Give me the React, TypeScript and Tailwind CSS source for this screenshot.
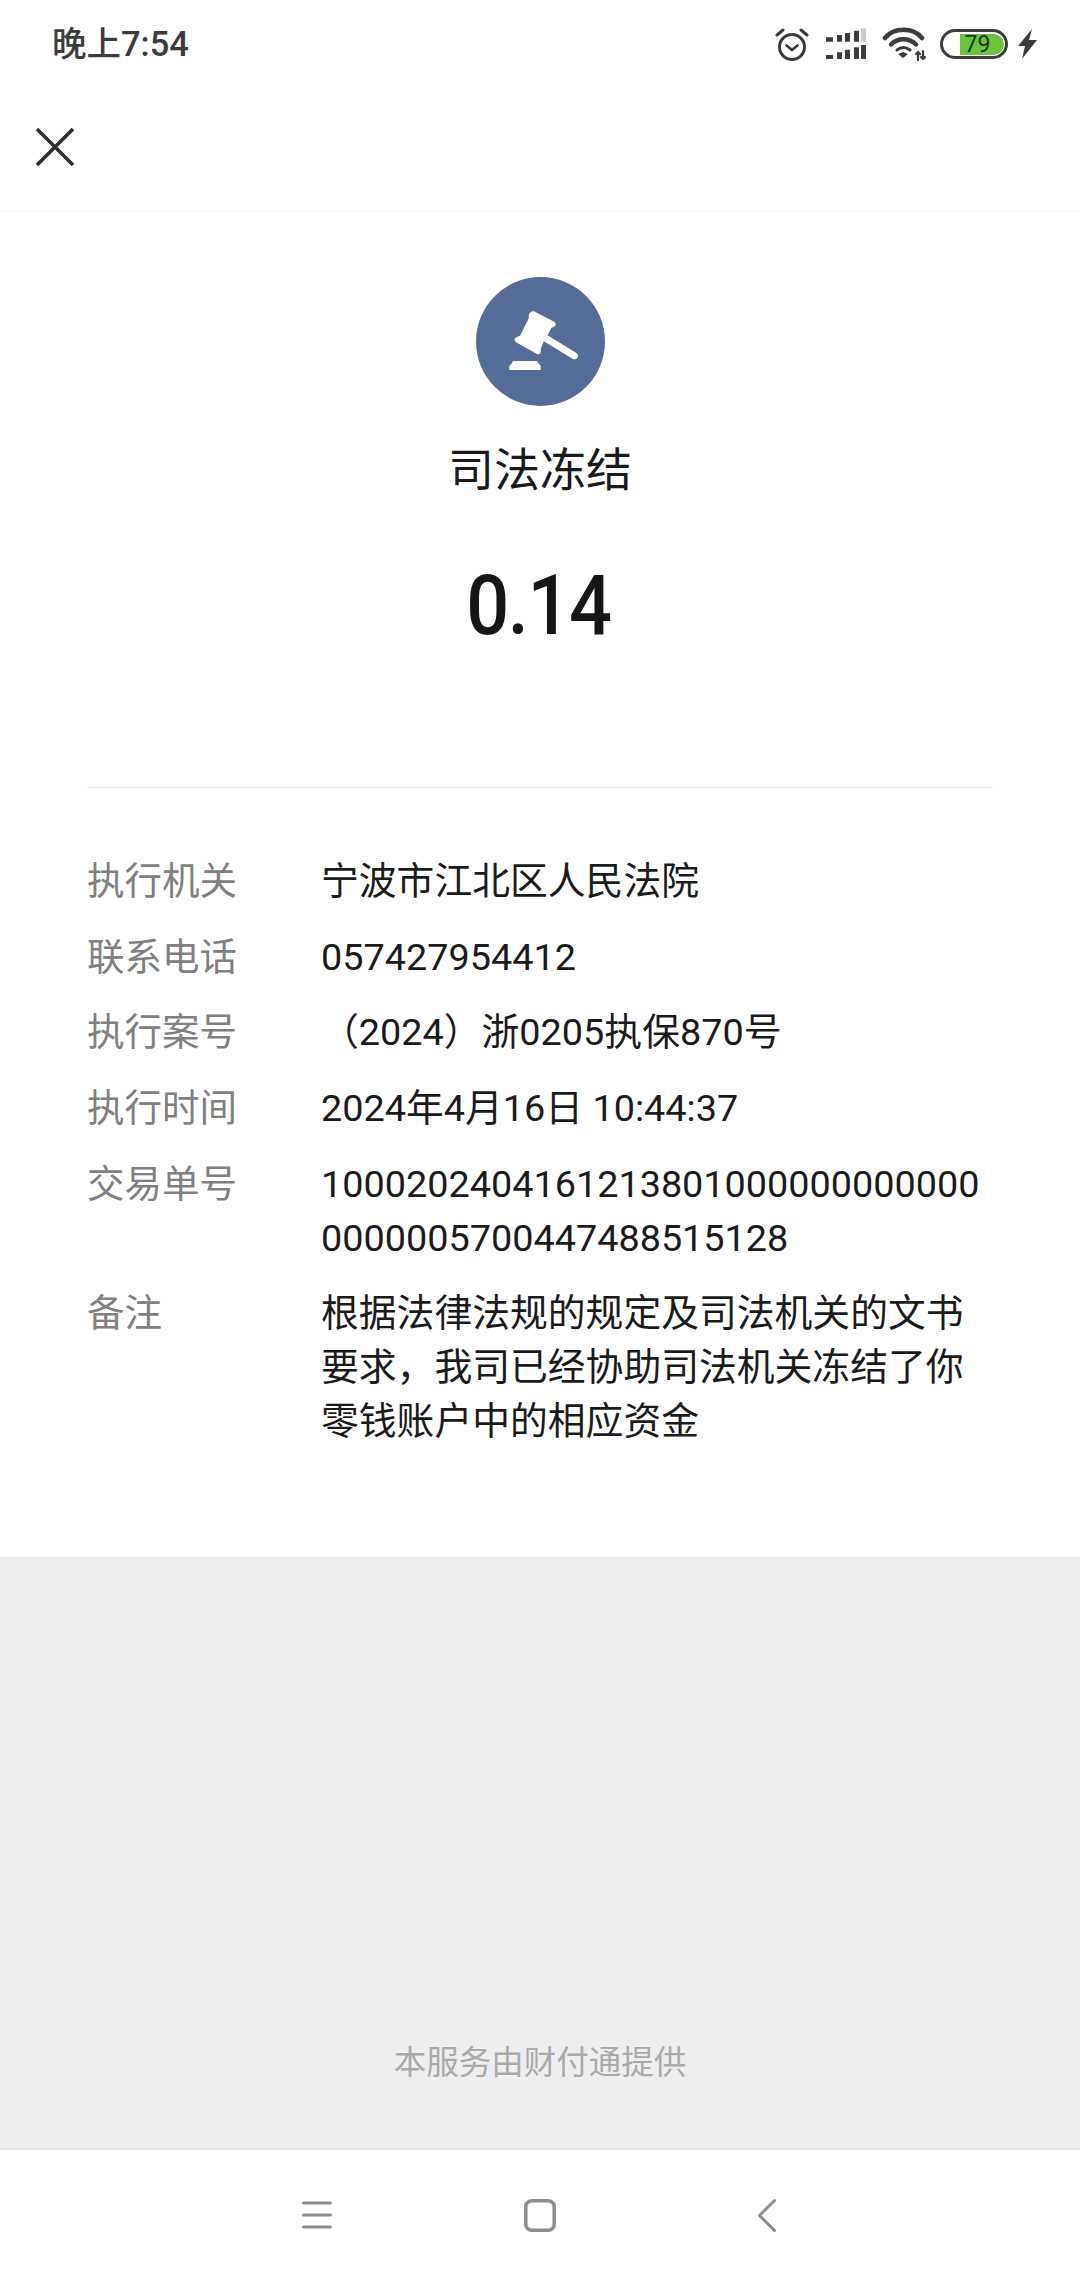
const cjk = "font-['Roboto','Noto_Sans_CJK_SC',sans-serif]";

const rows = [
  { label: "执行机关", value: ["宁波市江北区人民法院"] },
  { label: "联系电话", value: ["057427954412"] },
  { label: "执行案号", value: ["（2024）浙0205执保870号"] },
  { label: "执行时间", value: ["2024年4月16日 10:44:37"] },
  { label: "交易单号", value: ["1000202404161213801000000000000", "0000005700447488515128"] },
  { label: "备注", value: ["根据法律法规的规定及司法机关的文书", "要求，我司已经协助司法机关冻结了你", "零钱账户中的相应资金"] },
];

function StatusIcons() {
  return (
    <div className="flex items-center">
      <svg width="34" height="34" viewBox="0 0 34 34" fill="none" stroke="#3c3c3c" strokeLinecap="round" className="mr-[17px]">
        <circle cx="17" cy="20" r="12.5" strokeWidth="3" />
        <path d="M11.500 18.500l5.500 4.500 5.500-4.500" strokeWidth="2.600" />
        <path d="M2 8l6-5M32 8l-6-5" strokeWidth="3" />
      </svg>
      <svg width="40" height="32" viewBox="0 0 40 32" className="mr-[16px]">
        <path d="M0 9.300h7v4.400H0zM11 7h5v6.700h-5zM19 5h5v8.700h-5zM28 2.700h5v11h-5z" fill="#3c3c3c" />
        <path d="M35 0.300h5v13.400h-5z" fill="#c8c8c8" />
        <path d="M0 27h7v4H0zM11 24.300h5V31h-5zM19 21.700h5V31h-5zM28 19.300h5V31h-5zM35 17h5v14h-5z" fill="#3c3c3c" />
      </svg>
      <svg width="44" height="34" viewBox="0 0 44 34" fill="none" stroke="#3c3c3c" strokeLinecap="round" className="mr-[14px]">
        <path d="M3 11C12 0 31 0 40 11" strokeWidth="4.500" />
        <path d="M9 17.500c7-7 18-7 25 0" strokeWidth="4.500" />
        <path d="M15 23c4-3 9-3 13 0" strokeWidth="3" />
        <path d="M21 31l-5-4 5-2 5 2z" fill="#3c3c3c" strokeWidth="0" />
        <path d="M36 25v8M41 24v8M34 27l2-2 2 2M39 30l2 2 2-2" strokeWidth="2.200" />
      </svg>
      <div className="mr-[10px] flex h-[30px] w-[68px] items-center rounded-full border-[3.500px] border-[#3c3c3c] bg-white p-[1.500px]">
        <div className="ml-auto flex h-full w-[44px] items-center justify-center rounded-r-full bg-[#6cc23c]">
          <span className="pr-[8px] font-['Roboto',sans-serif] text-[23px] leading-none text-[#143a0b]">79</span>
        </div>
      </div>
      <svg width="19" height="30" viewBox="0 0 19 30">
        <path d="M14 0L0 17h7L4 30l15-19h-8z" fill="#3c3c3c" />
      </svg>
    </div>
  );
}

function Gavel() {
  return (
    <svg width="69" height="59" viewBox="235 180 207 177" fill="#fff" className="mb-[3px] ml-[6px]">
      <path d="M310 181L372 213Q378 218 373 226L362 231Q360 235 345 265L339 271L330 295Q332 305 325 310Q322 311 318 308L256 274Q248 268 254 260L268 254L295 200Q292 190 298 185Q303 179 310 181Z" />
      <path d="M345 262L431 314" stroke="#fff" strokeWidth="21" strokeLinecap="round" />
      <path d="M248 330H318Q322 331 323 336L330 345V357H236V345L244 336Q245 331 248 330Z" />
    </svg>
  );
}

export default function App() {
  return (
    <div className={`flex h-[2280px] w-[1080px] flex-col bg-white ${cjk}`}>
      <div className="flex h-[88px] items-center justify-between pl-[52px] pr-[43px]">
        <span className="pt-[2px] text-[34.500px] font-medium text-[#3c3c3c]">晚上7:54</span>
        <StatusIcons />
      </div>
      <div className="flex h-[124px] items-center border-b border-[#f2f2f2] pb-[6px] pl-[36px]">
        <svg width="38" height="38" viewBox="0 0 38 38" stroke="#2e2e2e" strokeWidth="3.500">
          <path d="M1 1l36 36M37 1L1 37" />
        </svg>
      </div>
      <main className="flex h-[1345px] flex-col items-center pt-[65px]">
        <div className="flex h-[129px] w-[129px] items-center justify-center rounded-full bg-[#566c98]">
          <Gavel />
        </div>
        <h1 className="mt-[34px] text-[46px] leading-[60px] text-[#1a1a1a]">司法冻结</h1>
        <p className="mt-[56px] scale-x-[0.9] pr-[4px] font-['Roboto',sans-serif] text-[84px] font-medium leading-[100px] tracking-[-1.500px] text-[#161616]">0.14</p>
        <div className="mt-[131px] w-[906px] border-t border-[#e9e9e9]" />
        <dl className="mt-[66px] flex w-[906px] flex-col gap-[21.700px]">
          {rows.map((row) => (
            <div key={row.label} className="flex leading-[54px]">
              <dt className="w-[234px] text-[37.500px] text-[#808080]">{row.label}</dt>
              <dd className="text-[37.800px] text-[#1b1b1b]">
                {row.value.map((line) => (
                  <div key={line} className="whitespace-nowrap">{line}</div>
                ))}
              </dd>
            </div>
          ))}
        </dl>
      </main>
      <div className="flex h-[593px] flex-col items-center justify-end border-b-2 border-[#e4e4e4] bg-[#eeeeee] pb-[63px]">
        <span className="text-[32.500px] leading-[44px] text-[#aaaaaa]">本服务由财付通提供</span>
      </div>
      <nav className="flex flex-1 items-center pl-[302px]">
        <svg width="30" height="28" viewBox="0 0 30 28" stroke="#8c8c8c" strokeWidth="3" strokeLinecap="round" className="mr-[192px]">
          <path d="M1.500 2h27M1.500 14h27M1.500 26h27" />
        </svg>
        <svg width="32" height="33" viewBox="0 0 32 33" fill="none" stroke="#8c8c8c" strokeWidth="3.500" className="mr-[202px]">
          <rect x="1.750" y="1.750" width="28.500" height="29.500" rx="6" />
        </svg>
        <svg width="18" height="33" viewBox="0 0 18 33" fill="none" stroke="#8c8c8c" strokeWidth="3" strokeLinecap="round" strokeLinejoin="round">
          <path d="M16.500 1.500L1.500 16.500l15 15" />
        </svg>
      </nav>
    </div>
  );
}
